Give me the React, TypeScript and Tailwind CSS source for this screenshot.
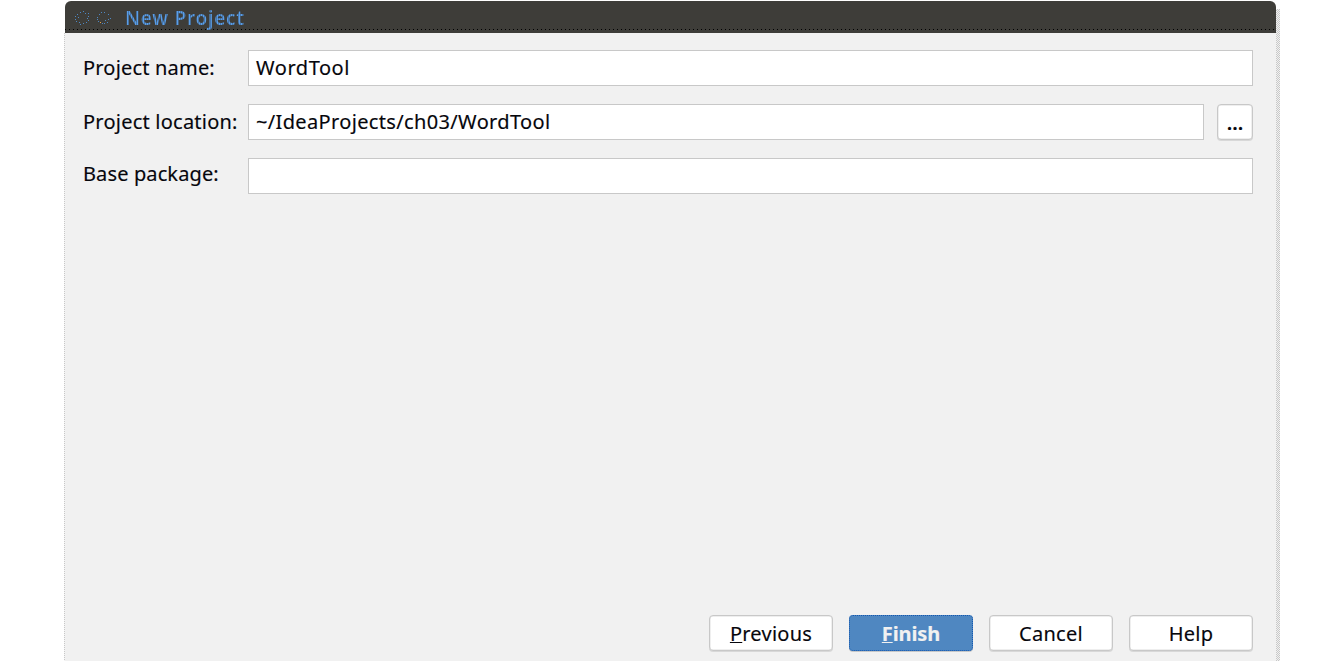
import type { ReactNode } from "react";

type FieldProps = {
  label: string;
  labelClass: string;
  valueClass?: string;
  children?: ReactNode;
  extra?: ReactNode;
};

function Field({ label, labelClass, valueClass = "", children, extra }: FieldProps) {
  return (
    <div className="flex h-9 items-start">
      <label className={`w-[165px] shrink-0 whitespace-nowrap ${labelClass}`}>{label}</label>
      <div
        className={`h-9 min-w-0 flex-1 border border-[#c8c8c8] bg-white pl-[7px] leading-[34px] ${valueClass}`}
      >
        {children}
      </div>
      {extra}
    </div>
  );
}

function DialogButton({ children, primary = false }: { children: ReactNode; primary?: boolean }) {
  return (
    <button
      type="button"
      className={
        primary
          ? "h-9 w-31 rounded-[4px] border border-dotted border-[#1458b0] bg-[#4f87c1] pt-0.5 font-bold leading-8 tracking-[-0.1px] text-[#f1f1f1] shadow-[0_1px_0_#c8c8c8]"
          : "h-9 w-31 rounded-[4px] border border-[#c8c8c8] bg-white pt-0.5 leading-8 tracking-[0.25px] shadow-[0_1px_0_#d8d8d8,inset_0_0_0_0.5px_#dedede]"
      }
    >
      {children}
    </button>
  );
}

function Mnemonic({ children }: { children: string }) {
  return <span className="underline decoration-1 underline-offset-1">{children}</span>;
}

const closeDots = [
  [8, 0], [5, 1], [10, 2], [13, 2], [2, 3], [0, 5], [3, 6], [13, 5], [12, 7],
  [0, 8], [13, 9], [1, 10], [4, 11], [11, 11], [5, 13], [8, 12],
];
const maximizeDots = [
  [26, 1], [29, 1], [24, 3], [33, 3], [22, 6], [35, 7], [22, 8],
  [30, 9], [33, 8], [23, 10], [32, 11], [27, 12], [29, 12],
];

export default function App() {
  return (
    <div className="h-[661px] w-[1343px] overflow-hidden bg-white pl-16 pt-px font-['Noto_Sans',sans-serif] text-[20px] text-[#06060c] [-webkit-text-stroke:0.15px]">
      <div className="flex h-[660px] w-[1216px]">
        <div className="mt-8 w-px bg-[repeating-linear-gradient(180deg,#c8c8c8_0_1px,#f4f4f4_1px_2px)]" />
        <main className="flex min-w-0 flex-1 flex-col rounded-t-[6px] bg-[#f1f1f1]">
          <header className="flex h-8 rounded-t-[6px] bg-[#3e3d39] bg-[repeating-linear-gradient(90deg,#000_0_1px,transparent_1px_4px)] bg-[length:100%_1px] bg-[position:0_28px] bg-no-repeat pl-[10px]">
            <svg className="mt-[10px]" width="38" height="14" viewBox="0 0 38 14" shapeRendering="crispEdges">
              {[...closeDots, ...maximizeDots].map(([x, y]) => (
                <rect key={`${x}-${y}`} x={x} y={y} width="1" height="1" fill="#4f87c1" />
              ))}
              <rect x="25" y="11" width="1" height="1" fill="#dca050" />
            </svg>
            <h1 className="ml-3 bg-[linear-gradient(90deg,#5b9ee8_50%,#4678ae_50%)] bg-[length:2px_2px] bg-clip-text text-[19px] font-semibold leading-[34px] tracking-[0.75px] text-transparent [-webkit-text-stroke:0]">
              New Project
            </h1>
          </header>
          <form className="flex flex-col gap-[18px] pl-[18px] pr-[23px] pt-[17px]">
            <Field label="Project name:" labelClass="leading-9 tracking-[0.19px]" valueClass="tracking-[0.55px]">
              WordTool
            </Field>
            <Field
              label="Project location:"
              labelClass="leading-9 tracking-[0.23px]"
              valueClass="tracking-[0.35px]"
              extra={
                <button
                  type="button"
                  className="ml-[13px] h-9 w-9 rounded-[4px] border border-[#c8c8c8] bg-white pt-0.5 font-semibold leading-8 shadow-[0_1px_0_#d8d8d8,inset_0_0_0_0.5px_#dedede]"
                >
                  ...
                </button>
              }
            >
              ~/IdeaProjects/ch03/WordTool
            </Field>
            <Field label="Base package:" labelClass="leading-8 tracking-[0.12px]" />
          </form>
          <footer className="mt-auto flex justify-end gap-4 pb-[10px] pr-[23px]">
            <DialogButton>
              <Mnemonic>P</Mnemonic>revious
            </DialogButton>
            <DialogButton primary>
              <Mnemonic>F</Mnemonic>inish
            </DialogButton>
            <DialogButton>Cancel</DialogButton>
            <DialogButton>Help</DialogButton>
          </footer>
        </main>
        <div className="mt-2 w-1 bg-[conic-gradient(#c8c8c8_25%,#f1f1f1_0_50%,#c8c8c8_0_75%,#f1f1f1_0)] bg-[length:2px_2px]" />
      </div>
    </div>
  );
}
